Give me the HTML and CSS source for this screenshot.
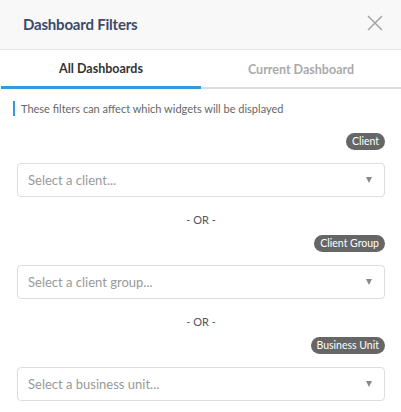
FILE: index.html
```html
<!DOCTYPE html>
<html>
<head>
<meta charset="utf-8">
<link rel="stylesheet" href="styles.css">
</head>
<body>
<div class="panel">
  <div class="header">
    <h1 class="title">Dashboard Filters</h1>
    <svg class="close" width="16" height="16" viewBox="0 0 16 16"><path d="M1 1L15 15M15 1L1 15" stroke="#a3a3a3" stroke-width="1.5" fill="none"/></svg>
  </div>
  <div class="tabs">
    <div class="tab active">All Dashboards</div>
    <div class="tab">Current Dashboard</div>
  </div>
  <div class="body">
    <p class="info">These filters can affect which widgets will be displayed</p>
    <div class="field">
      <div class="badge-row"><span class="badge">Client</span></div>
      <div class="select"><span>Select a client...</span><span class="caret"></span></div>
    </div>
    <div class="or">- OR -</div>
    <div class="field">
      <div class="badge-row"><span class="badge">Client Group</span></div>
      <div class="select"><span>Select a client group...</span><span class="caret"></span></div>
    </div>
    <div class="or">- OR -</div>
    <div class="field">
      <div class="badge-row"><span class="badge">Business Unit</span></div>
      <div class="select"><span>Select a business unit...</span><span class="caret"></span></div>
    </div>
  </div>
</div>
</body>
</html>
```
FILE: styles.css
```css
* { box-sizing: border-box; }
html, body { margin: 0; padding: 0; background: #fff; }
body { font-family: Lato, "Open Sans", sans-serif; width: 401px; height: 412px; overflow: hidden; }
.panel { width: 401px; }
.header {
  height: 50px;
  background: #f8f8f8;
  border-bottom: 1px solid #e6e6e6;
  display: flex;
  align-items: center;
  justify-content: space-between;
  padding: 0 18px 0 23px;
}
.title { margin: -2px 0 0; font-size: 15px; font-weight: 700; color: #3b4a6b; letter-spacing: -0.2px; }
.close { display: block; margin-top: -4px; }
.tabs { display: grid; grid-template-columns: 200px 1fr; height: 39px; padding-left: 1px; }
.tab {
  display: flex; align-items: center; justify-content: center;
  font-size: 12.5px; font-weight: 700; color: #aaa;
  border-bottom: 2px solid #ddd;
  padding-top: 2px;
}
.tab.active { color: #333; border-bottom: 3px solid #3498db; padding-top: 1px; }
.body { padding: 0 16px 0 17px; }
.info {
  margin: 12px 0 0 -4px;
  border-left: 2px solid #3498db;
  padding-left: 6px;
  font-size: 11px;
  color: #666;
  line-height: 15px;
}
.badge-row { display: flex; justify-content: flex-end; }
.badge {
  background: #666;
  color: #fff;
  font-size: 10.5px;
  line-height: 17px;
  height: 17px;
  padding: 0 6px;
  border-radius: 9px;
}
.field:first-of-type .badge-row { margin-top: 17px; }
.select {
  margin-top: 13px;
  height: 34px;
  border: 1px solid #ddd;
  border-radius: 4px;
  display: flex; align-items: center; justify-content: space-between;
  padding: 0 12px 0 10px;
  font-size: 13px;
  color: #999;
}
.caret {
  width: 0; height: 0;
  border-left: 3.5px solid transparent;
  border-right: 3.5px solid transparent;
  border-top: 6px solid #888;
}
.or { text-align: center; font-size: 11px; color: #555; margin-top: 16px; line-height: 14px; margin-bottom: 8px; }
```
